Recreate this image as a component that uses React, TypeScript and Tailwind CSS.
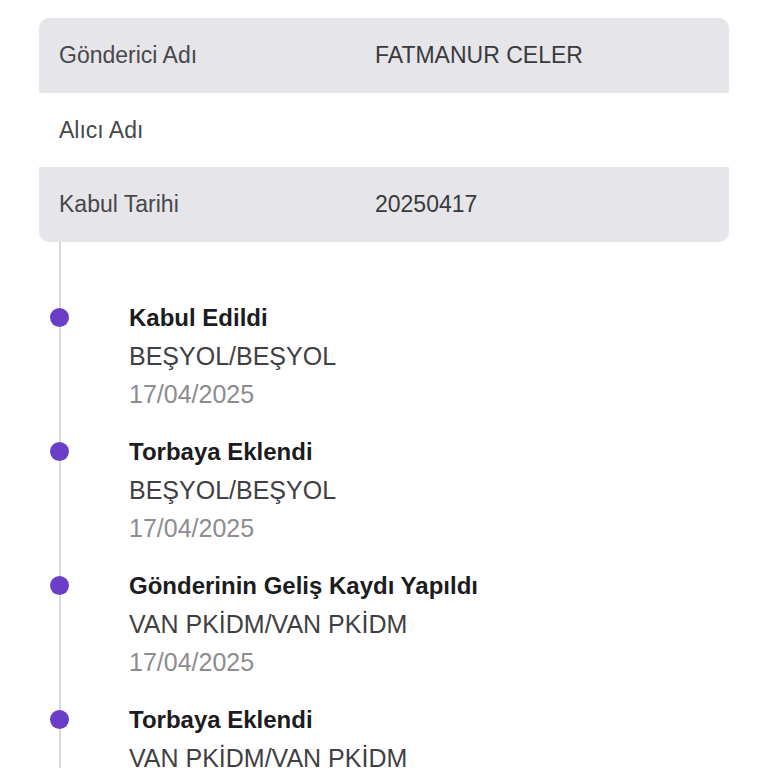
import React from 'react'

type InfoRow = { label: string; value: string; shaded: boolean }

const rows: InfoRow[] = [
  { label: 'Gönderici Adı', value: 'FATMANUR CELER', shaded: true },
  { label: 'Alıcı Adı', value: '', shaded: false },
  { label: 'Kabul Tarihi', value: '20250417', shaded: true },
]

type Step = { title: string; place: string; date: string }

const steps: Step[] = [
  { title: 'Kabul Edildi', place: 'BEŞYOL/BEŞYOL', date: '17/04/2025' },
  { title: 'Torbaya Eklendi', place: 'BEŞYOL/BEŞYOL', date: '17/04/2025' },
  { title: 'Gönderinin Geliş Kaydı Yapıldı', place: 'VAN PKİDM/VAN PKİDM', date: '17/04/2025' },
  { title: 'Torbaya Eklendi', place: 'VAN PKİDM/VAN PKİDM', date: '17/04/2025' },
]

export default function App() {
  return (
    <div
      className="min-h-screen bg-white px-[39px] pt-[18px]"
      style={{ fontFamily: '"Liberation Sans", Arial, sans-serif' }}
    >
      {/* Shipment info card */}
      <div className="overflow-hidden rounded-[10px]">
        {rows.map((row) => (
          <div
            key={row.label}
            className={`flex h-[74.5px] items-center text-[23px] ${row.shaded ? 'bg-[#e5e5ea]' : 'bg-white'}`}
          >
            <div className="w-[336px] pl-[20px] text-[#48484a]">{row.label}</div>
            <div className="text-[#3a3a3c]">{row.value}</div>
          </div>
        ))}
      </div>

      {/* Tracking timeline */}
      <div className="ml-[20px] border-l-2 border-[#d9d9de] pt-[57px]">
        {steps.map((step, i) => (
          <div key={i} className="relative pb-[20px] pl-[68px] leading-[38px]">
            <span className="absolute left-[-11.5px] top-[9.5px] h-[19px] w-[19px] rounded-full bg-[#6a3ec6]" />
            <div className="text-[24px] font-semibold text-[#1c1c1e]">{step.title}</div>
            <div className="text-[25px] text-[#3f3f44]">{step.place}</div>
            <div className="text-[25px] text-[#8c8c91]">{step.date}</div>
          </div>
        ))}
      </div>
    </div>
  )
}
